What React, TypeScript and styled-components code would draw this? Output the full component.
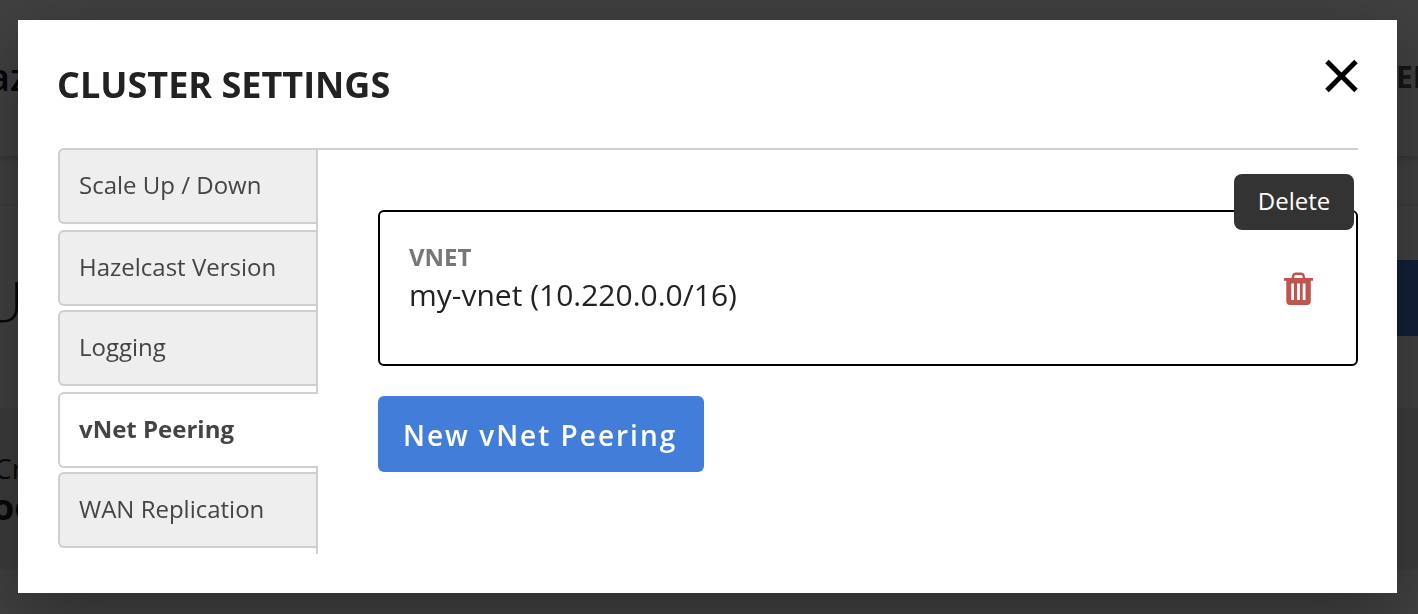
import React from "react";
import styled, { createGlobalStyle } from "styled-components";

const GlobalStyle = createGlobalStyle`
  *, *::before, *::after { box-sizing: border-box; }
  body {
    margin: 0;
    overflow-x: hidden;
    font-family: "Open Sans", "Noto Sans", sans-serif;
    color: #222;
    background: #fff;
  }
  button { font: inherit; cursor: pointer; }
`;

const Page = styled.div`
  min-height: 100vh;
  overflow: hidden;
  background: #fff;
`;

const TopBar = styled.header`
  display: flex;
  align-items: center;
  justify-content: space-between;
  height: 156px;
  padding-bottom: 4px;
  background: #fff;
  box-shadow: 0 2px 10px rgba(0, 0, 0, 0.25);
`;

const Brand = styled.span`
  margin-left: -12px;
  font-size: 38px;
  font-weight: 600;
  line-height: 48px;
  color: #0a1a33;
`;

const Organisation = styled.span`
  width: 22px;
  font-size: 30px;
  font-weight: 700;
  color: #555;
  white-space: nowrap;
`;

const ClusterPanel = styled.section`
  margin-top: 50px;
  background: #fff;
  box-shadow: 0 0 4px rgba(0, 0, 0, 0.2);
`;

const ClusterHeading = styled.div`
  display: flex;
  align-items: center;
  justify-content: space-between;
  height: 202px;
  padding-bottom: 18px;
`;

const ClusterName = styled.span`
  margin-left: -17px;
  padding-top: 4px;
  font-size: 56px;
  font-weight: 300;
`;

const Accent = styled.div`
  width: 40px;
  height: 76px;
  background: #437dda;
`;

const Details = styled.dl`
  display: flex;
  flex-direction: column;
  justify-content: center;
  height: 160px;
  margin: 0;
  background: #eaeaea;
`;

const DetailLabel = styled.dt`
  margin-left: -6px;
  font-size: 28px;
  line-height: 38px;
`;

const DetailValue = styled.dd`
  margin: 0 0 0 -8px;
  font-size: 36px;
  font-weight: 700;
  line-height: 40px;
`;

const Overlay = styled.div`
  position: fixed;
  inset: 0;
  overflow: auto;
  padding: 20px 21px 21px 18px;
  background: rgba(0, 0, 0, 0.75);
`;

const Dialog = styled.div`
  padding: 39px 39px 39px 40px;
  background: #fff;
  box-shadow: 0 22px 70px 4px rgba(0, 0, 0, 0.3);
`;

const DialogHeader = styled.header`
  display: flex;
  align-items: flex-start;
  justify-content: space-between;
  height: 89px;
`;

const Title = styled.h1`
  margin: 1px 0 0 -1px;
  font-size: 36px;
  font-weight: 700;
  line-height: 50px;
  text-transform: uppercase;
`;

const CloseButton = styled.button`
  display: flex;
  padding: 0;
  border: 0;
  background: none;
  color: #000;
`;

const Body = styled.div`
  display: flex;
  align-items: flex-start;
`;

const TabList = styled.div`
  display: grid;
  flex: none;
  width: 260px;
  grid-auto-rows: 82px 80px;
  align-items: start;
  border-right: 2px solid #cfcfcf;
`;

const Tab = styled.button<{ $active?: boolean }>`
  width: ${(p) => (p.$active ? "calc(100% + 2px)" : "100%")};
  height: 76px;
  padding: 0 0 4px 19px;
  border: 2px solid #cfcfcf;
  border-right: 0;
  border-radius: 6px 0 0 6px;
  background: ${(p) => (p.$active ? "#fff" : "#eee")};
  color: #444;
  font-size: 24px;
  font-weight: ${(p) => (p.$active ? 700 : 400)};
  text-align: left;
  white-space: nowrap;
`;

const TabPanel = styled.div`
  flex: 1;
  min-width: 0;
  padding: 60px 0 0 60px;
  border-top: 2px solid #cfcfcf;
`;

const PeeringCard = styled.article`
  display: flex;
  align-items: center;
  justify-content: space-between;
  height: 156px;
  margin-bottom: 30px;
  padding: 0 43px 0 29px;
  border: 2px solid #000;
  border-radius: 6px;
`;

const Field = styled.dl`
  margin: 0;
  padding-bottom: 20px;
`;

const FieldLabel = styled.dt`
  color: #777;
  font-size: 24px;
  font-weight: 700;
  line-height: 34px;
  text-transform: uppercase;
`;

const FieldValue = styled.dd`
  margin: 0;
  font-size: 30px;
  line-height: 42px;
`;

const DeleteAction = styled.div`
  position: relative;
  padding-top: 2px;
`;

const DeleteButton = styled.button`
  display: flex;
  padding: 0;
  border: 0;
  background: none;
  color: #c0544f;
`;

const Tooltip = styled.span`
  position: absolute;
  right: -41px;
  bottom: calc(100% + 40px);
  width: 120px;
  padding-bottom: 2px;
  border-radius: 8px;
  background: #333;
  color: #fff;
  font-size: 24px;
  line-height: 54px;
  text-align: center;
`;

const PrimaryButton = styled.button`
  height: 76px;
  padding: 2px 27px 0 25px;
  border: 0;
  border-radius: 6px;
  background: #437dda;
  color: #fff;
  font-size: 28px;
  font-weight: 600;
  letter-spacing: 2px;
  white-space: nowrap;
`;

const tabs = [
  "Scale Up / Down",
  "Hazelcast Version",
  "Logging",
  "vNet Peering",
  "WAN Replication",
];

const CloseIcon = () => (
  <svg width="33" height="34" viewBox="0 0 33 34" stroke="currentColor" strokeWidth="5" aria-hidden="true">
    <path d="M2 2.500 31 31.500M31 2.500 2 31.500" />
  </svg>
);

const TrashIcon = () => (
  <svg width="29" height="34" viewBox="0 0 29 34" fill="currentColor" aria-hidden="true">
    <path d="M8.500 7 9.200 3.700Q9.800 1.800 11.800 1.800H17Q19 1.800 19.500 3.700L20.300 7" fill="none" stroke="currentColor" strokeWidth="2.400" />
    <path d="M0 6H29V8.800H26.800V29Q26.800 33 23 33H6Q2.300 33 2.300 29V8.800H0Z" />
    <path d="M7.300 11.500H10V28H7.300ZM13.100 11.500H15.900V28H13.100ZM18.700 11.500H21.500V28H18.700Z" fill="#fff" />
  </svg>
);

export default function App() {
  const [active, setActive] = React.useState("vNet Peering");

  return (
    <>
      <GlobalStyle />
      <Page aria-hidden="true">
        <TopBar>
          <Brand>az</Brand>
          <Organisation>EN</Organisation>
        </TopBar>
        <ClusterPanel>
          <ClusterHeading>
            <ClusterName>U</ClusterName>
            <Accent />
          </ClusterHeading>
          <Details>
            <DetailLabel>Cr</DetailLabel>
            <DetailValue>oo</DetailValue>
          </Details>
        </ClusterPanel>
      </Page>
      <Overlay>
        <Dialog role="dialog" aria-modal="true" aria-labelledby="dialog-title">
          <DialogHeader>
            <Title id="dialog-title">Cluster Settings</Title>
            <CloseButton type="button" aria-label="Close">
              <CloseIcon />
            </CloseButton>
          </DialogHeader>
          <Body>
            <TabList role="tablist" aria-orientation="vertical">
              {tabs.map((name) => (
                <Tab
                  key={name}
                  type="button"
                  role="tab"
                  aria-selected={name === active}
                  $active={name === active}
                  onClick={() => setActive(name)}
                >
                  {name}
                </Tab>
              ))}
            </TabList>
            <TabPanel role="tabpanel" aria-label={active}>
              <PeeringCard>
                <Field>
                  <FieldLabel>vNet</FieldLabel>
                  <FieldValue>my-vnet (10.220.0.0/16)</FieldValue>
                </Field>
                <DeleteAction>
                  <DeleteButton type="button" aria-labelledby="delete-tip">
                    <TrashIcon />
                  </DeleteButton>
                  <Tooltip id="delete-tip" role="tooltip">
                    Delete
                  </Tooltip>
                </DeleteAction>
              </PeeringCard>
              <PrimaryButton type="button">New vNet Peering</PrimaryButton>
            </TabPanel>
          </Body>
        </Dialog>
      </Overlay>
    </>
  );
}
